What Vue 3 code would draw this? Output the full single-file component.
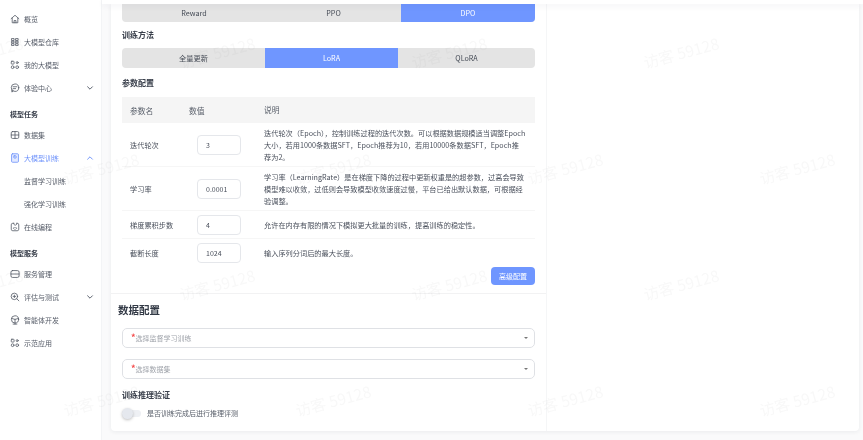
<template>
  <div class="page">
    <aside class="sidebar">
      <template v-for="item in menu" :key="item.label">
        <div v-if="item.heading" class="menu-heading">{{ item.label }}</div>
        <div v-else-if="item.sub" class="menu-item menu-sub">{{ item.label }}</div>
        <div v-else class="menu-item" :class="{ active: item.active }">
          <svg class="menu-icon" viewBox="0 0 16 16" fill="none" stroke="currentColor" stroke-width="1.3" stroke-linecap="round" stroke-linejoin="round" v-html="icons[item.icon]"></svg>
          <span class="menu-label">{{ item.label }}</span>
          <svg v-if="item.arrow" class="menu-arrow" viewBox="0 0 10 10" fill="none" stroke="currentColor" stroke-width="1.2" stroke-linecap="round" stroke-linejoin="round">
            <polyline :points="item.arrow === 'up' ? '2 6.5 5 3.5 8 6.5' : '2 3.5 5 6.5 8 3.5'" />
          </svg>
        </div>
      </template>
    </aside>

    <main class="main">
      <div class="topbar"></div>
      <div class="content">
        <div class="card">
          <section class="config">
            <div class="top-part">
              <div class="segment first">
                <div v-for="s in algos" :key="s" class="seg-item" :class="{ on: s === 'DPO' }">{{ s }}</div>
              </div>
              <div class="label label-method">训练方法</div>
              <div class="segment second">
                <div v-for="s in methods" :key="s" class="seg-item" :class="{ on: s === 'LoRA' }">{{ s }}</div>
              </div>
              <div class="label label-params">参数配置</div>
              <div class="table">
                <div class="row head">
                  <div class="c-name">参数名</div>
                  <div class="c-value">数值</div>
                  <div class="c-desc">说明</div>
                </div>
                <div v-for="p in params" :key="p.name" class="row" :style="{ height: p.height + 'px' }">
                  <div class="c-name">{{ p.name }}</div>
                  <div class="c-value"><div class="num-input">{{ p.value }}</div></div>
                  <div class="c-desc">{{ p.desc }}</div>
                </div>
              </div>
              <div class="actions"><button class="primary">高级配置</button></div>
            </div>

            <div class="data-part">
              <h2 class="title">数据配置</h2>
              <div class="select"><span class="star">*</span>选择监督学习训练<i class="caret"></i></div>
              <div class="select"><span class="star">*</span>选择数据集<i class="caret"></i></div>
              <div class="label label-verify">训练推理验证</div>
              <div class="switch-row">
                <span class="switch"><span class="knob"></span></span>
                <span>是否训练完成后进行推理评测</span>
              </div>
            </div>
          </section>
          <section class="blank"></section>
        </div>
      </div>
    </main>

    <div class="marks">
      <span v-for="m in marks" :key="m.x + '-' + m.y" class="mark" :style="{ left: m.x + 'px', top: m.y + 'px' }">访客 59128</span>
    </div>
  </div>
</template>

<script setup>
const icons = {
  home: '<path d="M1.8 7.5 8 2l6.2 5.5"/><path d="M3.5 6.5V14h9V6.5"/><path d="M6.5 14v-3.5h3V14"/>',
  store: '<path d="M3 2.5h3.5v3H3zM3 6.8h3.5v2.6H3zM3 10.7h3.5v2.8H3zM9.5 2.5H13v3H9.5zM9.5 6.8H13v2.6H9.5zM9.5 10.7H13v2.8H9.5z"/>',
  apps: '<rect x="2" y="2" width="4.5" height="4.5" rx="1"/><circle cx="11.5" cy="4.2" r="1.6"/><circle cx="4.2" cy="11.5" r="2.2"/><circle cx="11.5" cy="11.5" r="2.2"/>',
  chat: '<circle cx="8" cy="7.5" r="6"/><path d="M5 6h6M5 9h4"/><path d="M5 13l-2 1.5V11"/>',
  grid: '<rect x="2" y="2.5" width="12" height="11" rx="2"/><path d="M8 2.5v11M2 8h12"/>',
  book: '<rect x="2.5" y="1.2" width="11" height="13.6" rx="1.5" fill="#e3eaff"/><rect x="6.2" y="4.5" width="3.6" height="3.6" rx=".5"/>',
  code: '<path d="M6 2H4.500A2.500 2.500 0 0 0 2 4.500v7A2.500 2.500 0 0 0 4.500 14h7a2.500 2.500 0 0 0 2.500-2.500V4.500A2.500 2.500 0 0 0 11.500 2H11"/><path d="M6 2c0 2 1 3 2.500 3S11 4 11 2"/><path d="M6.800 8.500 5.500 10l1.300 1.500M9.200 8.500l1.300 1.500-1.300 1.500"/>',
  server: '<rect x="1.500" y="2.500" width="13" height="11" rx="2.500"/><path d="M1.500 8h13"/>',
  eval: '<circle cx="7" cy="7" r="5.200"/><path d="M11 11l3.200 3.200"/><path d="M5 7h4M7 5v4"/>',
  agent: '<circle cx="8" cy="7" r="5.800"/><path d="M8 7v7.500M2.500 5.500 8 7l5.500-1.500M5 14.500h6"/>',
}

const menu = [
  { label: '概览', icon: 'home' },
  { label: '大模型仓库', icon: 'store' },
  { label: '我的大模型', icon: 'apps' },
  { label: '体验中心', icon: 'chat', arrow: 'down' },
  { label: '模型任务', heading: true },
  { label: '数据集', icon: 'grid' },
  { label: '大模型训练', icon: 'book', active: true, arrow: 'up' },
  { label: '监督学习训练', sub: true },
  { label: '强化学习训练', sub: true },
  { label: '在线编程', icon: 'code' },
  { label: '模型服务', heading: true },
  { label: '服务管理', icon: 'server' },
  { label: '评估与测试', icon: 'eval', arrow: 'down' },
  { label: '智能体开发', icon: 'agent' },
  { label: '示范应用', icon: 'apps' },
]

const algos = ['Reward', 'PPO', 'DPO']
const methods = ['全量更新', 'LoRA', 'QLoRA']

const params = [
  { name: '迭代轮次', value: '3', height: 44, desc: '迭代轮次（Epoch），控制训练过程的迭代次数。可以根据数据规模适当调整Epoch\n大小，若用1000条数据SFT，Epoch推荐为10，若用10000条数据SFT，Epoch推\n荐为2。' },
  { name: '学习率', value: '0.0001', height: 44, desc: '学习率（LearningRate）是在梯度下降的过程中更新权重是的超参数，过高会导致\n模型难以收敛，过低则会导致模型收敛速度过慢，平台已给出默认数据，可根据经\n验调整。' },
  { name: '梯度累积步数', value: '4', height: 28, desc: '允许在内存有限的情况下模拟更大批量的训练，提高训练的稳定性。' },
  { name: '截断长度', value: '1024', height: 28, desc: '输入序列分词后的最大长度。' },
]

// watermark grid, two staggered sets
const marks = []
for (const y of [52, 284]) for (const x of [-15, 217, 449, 681]) marks.push({ x, y })
for (const y of [168, 400]) for (const x of [101, 333, 565, 797]) marks.push({ x, y })
</script>

<style scoped>
.page {
  position: relative;
  display: flex;
  width: 863px;
  height: 440px;
  overflow: hidden;
  background: #fafafb;
  font-family: "Noto Sans CJK SC", "Noto Sans", sans-serif;
  color: #3d4452;
  filter: blur(0.3px);
}

.sidebar {
  flex-shrink: 0;
  width: 102px;
  padding-top: 7px;
  box-sizing: border-box;
  background: #fff;
  border-right: 1px solid #f3f4f6;
}

.menu-item {
  display: flex;
  align-items: center;
  height: 23px;
  padding-left: 10px;
  font-size: 7px;
  color: #565c68;
}

.menu-item.active {
  color: #6f93fb;
}

.menu-sub {
  padding-left: 24px;
}

.menu-heading {
  display: flex;
  align-items: center;
  height: 18.5px;
  margin-top: 5.5px;
  padding-left: 10px;
  font-size: 7px;
  font-weight: 700;
  color: #3a404c;
}

.menu-icon {
  width: 10px;
  height: 10px;
  flex-shrink: 0;
  margin-right: 4px;
}

.menu-label {
  flex: 1;
}

.menu-arrow {
  width: 8px;
  height: 8px;
  margin-right: 7px;
}

.main {
  display: flex;
  flex-direction: column;
  flex: 1;
  min-width: 0;
}

.topbar {
  position: relative;
  z-index: 1;
  flex-shrink: 0;
  height: 4px;
  background: #fff;
  box-shadow: 0 2px 6px rgba(30, 40, 60, 0.06);
}

.content {
  flex: 1;
  min-height: 0;
  padding: 0 4px 9px 9px;
}

.card {
  display: flex;
  height: 100%;
  overflow: hidden;
  background: #fff;
  border-radius: 0 0 4px 4px;
  box-shadow: 0 1px 4px rgba(30, 40, 60, 0.07);
}

.config {
  display: flex;
  flex-direction: column;
  flex-shrink: 0;
  width: 436px;
  border-right: 1px solid #f5f6f7;
  box-sizing: border-box;
}

.blank {
  flex: 1;
}

.top-part {
  padding: 0 11px 8px;
  border-bottom: 1px solid #f2f2f3;
}

.segment {
  display: grid;
  overflow: hidden;
  background: #e4e4e4;
  font-size: 7.2px;
  color: #444a55;
}

.segment.first {
  grid-template-columns: 144px 135px 1fr;
  height: 18px;
  border-radius: 0 0 4px 4px;
}

.segment.second {
  grid-template-columns: 143px 133px 1fr;
  height: 20px;
  border-radius: 4px;
}

.seg-item {
  display: flex;
  align-items: center;
  justify-content: center;
}

.seg-item.on {
  background: #6f96ff;
  color: #fff;
}

.label {
  font-size: 8px;
  font-weight: 700;
  color: #3a404c;
  line-height: 14px;
}

.label-method {
  margin: 6px 0;
}

.label-params {
  margin: 8px 0 7px;
}

.label-verify {
  margin-top: 9px;
}

.table {
  font-size: 7.2px;
  color: #4a505c;
}

.row {
  display: flex;
  align-items: center;
  border-bottom: 1px solid #f6f6f6;
  box-sizing: border-box;
}

.row:last-child {
  border-bottom: none;
}

.row.head {
  height: 26px;
  background: #f5f5f5;
  border-bottom: none;
  font-size: 7.8px;
  color: #5a606b;
}

.c-name {
  flex-shrink: 0;
  width: 67px;
  padding-left: 8px;
  box-sizing: border-box;
}

.c-value {
  flex-shrink: 0;
  width: 75px;
}

.c-desc {
  flex: 1;
  line-height: 12px;
  white-space: pre-line;
}

.num-input {
  display: flex;
  align-items: center;
  width: 44px;
  height: 20px;
  margin-left: 8px;
  padding-left: 8px;
  box-sizing: border-box;
  border: 1px solid #e5e7eb;
  border-radius: 4px;
  background: #fff;
  font-size: 7px;
}

.actions {
  display: flex;
  justify-content: flex-end;
}

.primary {
  width: 44px;
  height: 18px;
  padding: 0;
  border: none;
  border-radius: 4px;
  background: #6f96ff;
  color: #fff;
  font: inherit;
  font-size: 7px;
}

.data-part {
  padding: 0 11px;
}

.title {
  margin: 8px 0 10px -4px;
  font-size: 10.5px;
  line-height: 16px;
  font-weight: 700;
  color: #333a46;
}

.select {
  position: relative;
  display: flex;
  align-items: center;
  height: 20px;
  padding-left: 8px;
  box-sizing: border-box;
  border: 1px solid #dfe1e5;
  border-radius: 5px;
  font-size: 7px;
  color: #a0a4ab;
}

.select + .select {
  margin-top: 11px;
}

.star {
  margin-top: -2px;
  color: #f44b4b;
  font-size: 9px;
  font-weight: 700;
  line-height: 9px;
}

.caret {
  position: absolute;
  right: 6px;
  top: 8px;
  border: 2px solid transparent;
  border-top: 2.5px solid #777;
  border-bottom: none;
}

.switch-row {
  display: flex;
  align-items: center;
  gap: 6px;
  margin-top: 6px;
  font-size: 7px;
  color: #5a606b;
}

.switch {
  position: relative;
  display: block;
  width: 19px;
  height: 7px;
  border-radius: 4px;
  background: #eef0f4;
}

.knob {
  position: absolute;
  left: 0;
  top: -2px;
  width: 11px;
  height: 11px;
  border-radius: 50%;
  background: #e5e8ee;
  box-shadow: 0 1px 3px rgba(0, 0, 0, 0.25);
}

.marks {
  position: absolute;
  inset: 0;
  pointer-events: none;
}

.mark {
  position: absolute;
  transform: translate(-50%, -50%) rotate(-15deg);
  font-size: 15.5px;
  white-space: nowrap;
  color: rgba(120, 125, 135, 0.055);
}
</style>
